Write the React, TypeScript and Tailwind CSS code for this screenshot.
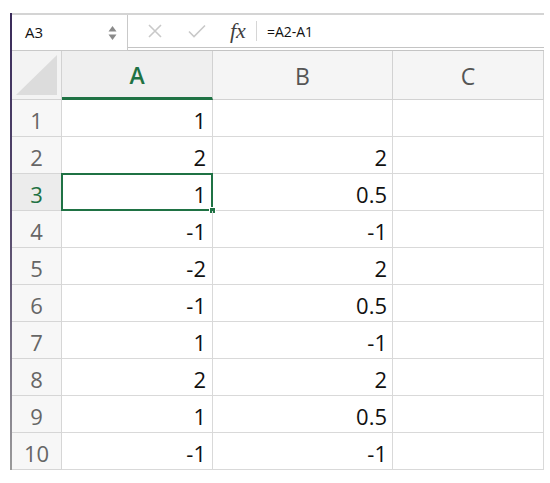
const ROWS: [string, string][] = [
  ["1", ""],
  ["2", "2"],
  ["1", "0.5"],
  ["-1", "-1"],
  ["-2", "2"],
  ["-1", "0.5"],
  ["1", "-1"],
  ["2", "2"],
  ["1", "0.5"],
  ["-1", "-1"],
];

const GREEN = "#1f7244";
const FONT = { fontFamily: '"Open Sans", "Noto Sans", sans-serif' };

function FormulaBar() {
  return (
    <div className="flex h-[39px] border-t-2 border-[#d4d4d4] bg-white">
      <div className="flex w-[116px] items-center justify-between border-r border-b border-[#c9c9c9] pl-[13px] pr-[10px]">
        <span className="text-[15px] text-[#111]">A3</span>
        <svg width="9" height="16" viewBox="0 0 9 16">
          <path d="M4.5 1 L8.5 6.5 L0.5 6.5 Z" fill="#8a8a8a" />
          <path d="M4.5 15 L8.5 9.5 L0.5 9.5 Z" fill="#8a8a8a" />
        </svg>
      </div>
      <div className="flex flex-1 items-center border-b-4 border-double border-[#c4c4c4]">
        <svg className="ml-[20px]" width="14" height="14" viewBox="0 0 14 14">
          <path d="M1 1 L13 13 M13 1 L1 13" stroke="#c9c9c9" strokeWidth="1.6" fill="none" />
        </svg>
        <svg className="ml-[26px]" width="18" height="14" viewBox="0 0 18 14">
          <path d="M1 7.5 L6 12.5 L17 1.5" stroke="#c9c9c9" strokeWidth="1.6" fill="none" />
        </svg>
        <span
          className="ml-[24px] text-[22px] italic leading-none text-[#3f3f3f]"
          style={{ fontFamily: '"Liberation Serif", "DejaVu Serif", serif' }}
        >
          fx
        </span>
        <div className="ml-[10px] h-[20px] w-px bg-[#d6d6d6]" />
        <span className="ml-[10px] text-[14px] text-[#111]">=A2-A1</span>
      </div>
    </div>
  );
}

function Header() {
  return (
    <div className="flex h-[50px]">
      <div className="relative w-[50px] shrink-0 border-r border-b border-[#d2d2d2] bg-[#f3f3f3]">
        <svg className="absolute right-[4px] bottom-[4px]" width="41" height="40" viewBox="0 0 41 40">
          <path d="M41 0 L41 40 L0 40 Z" fill="#dcdcdc" />
        </svg>
      </div>
      <div
        className="flex w-[151px] shrink-0 items-center justify-center border-r border-b-[3px] border-r-[#d2d2d2] bg-[#efefef] pt-[3px] text-[23px] font-semibold"
        style={{ borderBottomColor: GREEN, color: GREEN }}
      >
        A
      </div>
      <div className="flex w-[180px] shrink-0 items-center justify-center border-r border-b border-[#d2d2d2] bg-[#f5f5f5] pt-[2px] text-[23px] text-[#555]">
        B
      </div>
      <div className="flex w-[151px] shrink-0 items-center justify-center border-r border-b border-[#d2d2d2] bg-[#f5f5f5] pt-[2px] text-[23px] text-[#555]">
        C
      </div>
    </div>
  );
}

function Row({ n, a, b }: { n: number; a: string; b: string }) {
  const sel = n === 3;
  return (
    <div className="flex h-[37px]">
      <div
        className="flex w-[50px] shrink-0 items-center justify-center border-r border-b border-[#d6d6d6] pt-[4px] text-[22px]"
        style={{ backgroundColor: sel ? "#ececec" : "#f7f7f7", color: sel ? GREEN : "#666" }}
      >
        {n}
      </div>
      <div className="relative flex w-[151px] shrink-0 items-center justify-end border-r border-b border-[#d9d9d9] pt-[5px] pr-[6px] text-[22px] text-[#111]">
        {a}
        {sel && (
          <>
            <div
              className="pointer-events-none absolute top-[-1px] right-[-1px] bottom-[-1px] left-[-1px] border-2"
              style={{ borderColor: GREEN }}
            />
            <div
              className="absolute right-[-4px] bottom-[-4px] h-[7px] w-[7px] border border-white"
              style={{ backgroundColor: GREEN }}
            />
          </>
        )}
      </div>
      <div className="flex w-[180px] shrink-0 items-center justify-end border-r border-b border-[#d9d9d9] pt-[5px] pr-[5px] text-[22px] text-[#111]">
        {b}
      </div>
      <div className="w-[151px] shrink-0 border-r border-b border-[#d9d9d9]" />
    </div>
  );
}

export default function App() {
  return (
    <div className="h-[483px] w-[550px] overflow-hidden bg-white" style={FONT}>
      <div className="flex pt-[13px]">
        <div className="ml-[10px] h-[457px] w-[2px] shrink-0 bg-linear-to-b from-[#3a2b5a] via-[#5b4f70] to-[#9a9a9a]" />
        <div className="flex h-[457px] w-[532px] flex-col overflow-hidden">
          <FormulaBar />
          <Header />
          {ROWS.map(([a, b], i) => (
            <Row key={i} n={i + 1} a={a} b={b} />
          ))}
        </div>
      </div>
    </div>
  );
}
